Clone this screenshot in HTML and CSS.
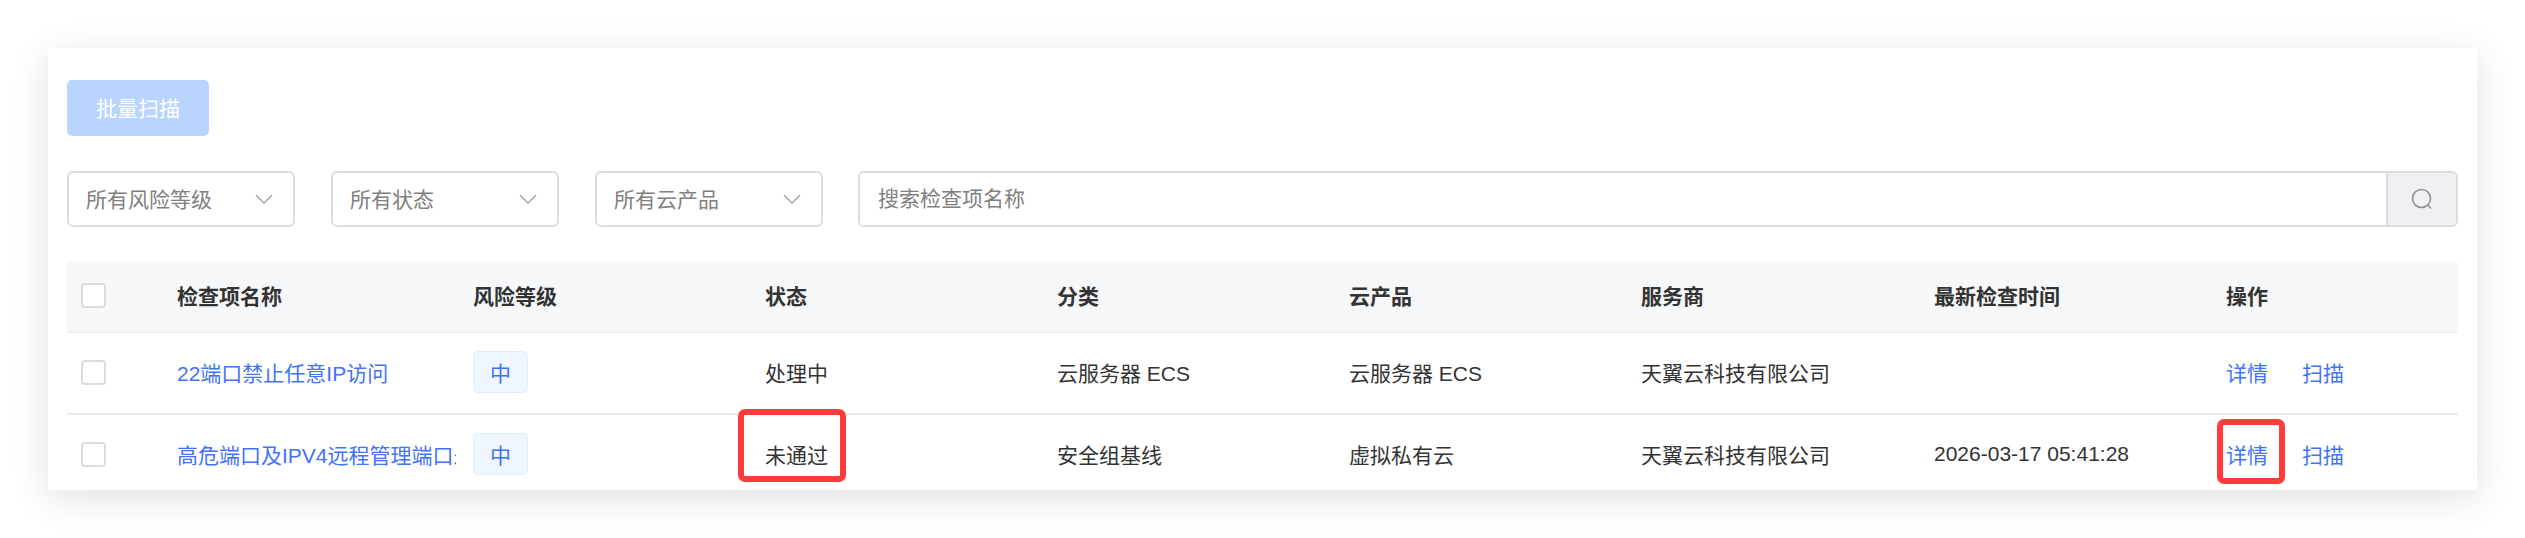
FILE: index.html
```html
<!DOCTYPE html>
<html lang="en">
<head>
    <meta charset="UTF-8">
    <title>Security Checks</title>
    <link rel="stylesheet" href="styles.css">
</head>
<body>
    <div class="card">
        <button class="batch-btn">批量扫描</button>

        <div class="filters">
            <div class="select">所有风险等级
                <svg class="chevron" viewBox="0 0 18 10"><path d="M1 1l8 8 8-8"/></svg>
            </div>
            <div class="select">所有状态
                <svg class="chevron" viewBox="0 0 18 10"><path d="M1 1l8 8 8-8"/></svg>
            </div>
            <div class="select">所有云产品
                <svg class="chevron" viewBox="0 0 18 10"><path d="M1 1l8 8 8-8"/></svg>
            </div>
            <div class="search">
                <input type="text" placeholder="搜索检查项名称">
                <div class="search-btn">
                    <svg viewBox="0 0 22 22"><circle cx="10.5" cy="10.5" r="9"/><path d="M16.8 17l3.2 3.4"/></svg>
                </div>
            </div>
        </div>

        <table class="checks">
            <colgroup>
                <col class="col-check">
                <col class="col-name">
                <col class="col-wide">
                <col class="col-wide">
                <col class="col-wide">
                <col class="col-wide">
                <col class="col-wider">
                <col class="col-wide">
                <col>
            </colgroup>
            <thead>
                <tr>
                    <th><span class="checkbox"></span></th>
                    <th>检查项名称</th>
                    <th>风险等级</th>
                    <th>状态</th>
                    <th>分类</th>
                    <th>云产品</th>
                    <th>服务商</th>
                    <th>最新检查时间</th>
                    <th>操作</th>
                </tr>
            </thead>
            <tbody>
                <tr>
                    <td><span class="checkbox"></span></td>
                    <td><div class="name"><a href="#">22端口禁止任意IP访问</a></div></td>
                    <td><span class="tag">中</span></td>
                    <td>处理中</td>
                    <td>云服务器 ECS</td>
                    <td>云服务器 ECS</td>
                    <td>天翼云科技有限公司</td>
                    <td></td>
                    <td class="actions"><a href="#">详情</a><a href="#">扫描</a></td>
                </tr>
                <tr>
                    <td><span class="checkbox"></span></td>
                    <td><div class="name"><a href="#">高危端口及IPV4远程管理端口未禁止任意IP访问</a></div></td>
                    <td><span class="tag">中</span></td>
                    <td class="marked">未通过<span class="mark mark-status"></span></td>
                    <td>安全组基线</td>
                    <td>虚拟私有云</td>
                    <td>天翼云科技有限公司</td>
                    <td>2026-03-17 05:41:28</td>
                    <td class="actions marked"><a href="#">详情</a><a href="#">扫描</a><span class="mark mark-detail"></span></td>
                </tr>
            </tbody>
        </table>
    </div>
</body>
</html>
```

FILE: styles.css
```css
body {
    margin: 0;
    padding: 48px;
    background-color: white;
    font-family: "Liberation Sans", "Noto Sans CJK SC", sans-serif;
    font-size: 21px;
    color: #333;
}
a {
    color: #4173f5;
    text-decoration: none;
}

.card {
    box-sizing: border-box;
    width: 2429px;
    height: 442px;
    padding: 32px 19px 0;
    background-color: white;
    box-shadow: 0 8px 36px rgba(0, 0, 0, 0.12);
    overflow: hidden;
}

.batch-btn {
    display: block;
    width: 142px;
    height: 56px;
    padding: 0 0 2px;
    border: none;
    border-radius: 5px;
    background-color: #b9d4ff;
    color: white;
    font: inherit;
}

/* Filters */
.filters {
    display: flex;
    gap: 36px;
    margin-top: 35px;
}
.select {
    box-sizing: border-box;
    flex: none;
    width: 228px;
    height: 56px;
    padding: 0 20px 2px 17px;
    display: flex;
    align-items: center;
    justify-content: space-between;
    border: 2px solid #dcdcdc;
    border-radius: 6px;
    color: #808080;
}
.chevron {
    width: 18px;
    height: 10px;
    margin-top: 2px;
    fill: none;
    stroke: #a6a6a6;
    stroke-width: 1.5;
}
.search {
    box-sizing: border-box;
    flex: 1;
    height: 56px;
    margin-left: -1px;
    display: flex;
    border: 2px solid #dcdcdc;
    border-radius: 6px;
    overflow: hidden;
}
.search input {
    flex: 1;
    min-width: 0;
    padding: 0 18px;
    border: none;
    outline: none;
    font: inherit;
    color: #333;
}
.search input::placeholder {
    color: #808080;
}
.search-btn {
    flex: none;
    width: 68px;
    display: flex;
    align-items: center;
    justify-content: center;
    border-left: 2px solid #dcdcdc;
    background-color: #eff0f4;
}
.search-btn svg {
    width: 22px;
    height: 22px;
    fill: none;
    stroke: #8f8f8f;
    stroke-width: 1.5;
}

/* Table */
.checks {
    width: 100%;
    margin-top: 35px;
    border-collapse: collapse;
    table-layout: fixed;
}
.col-check {
    width: 110px;
}
.col-name {
    width: 296px;
}
.col-wide {
    width: 292px;
}
.col-wider {
    width: 293px;
}
.checks th {
    height: 66px;
    padding: 0 0 4px;
    text-align: left;
    font-weight: 700;
    background-color: #f6f7f9;
    border-bottom: 1px solid #e8ebf2;
}
.checks td {
    height: 78px;
    padding: 0 0 2px;
    border-bottom: 2px solid #ececec;
}
.checks th:first-child,
.checks td:first-child {
    padding-left: 14px;
}
.checkbox {
    box-sizing: border-box;
    display: block;
    width: 25px;
    height: 25px;
    border: 2px solid #dcdcdc;
    border-radius: 4px;
    background-color: white;
}
.name {
    width: 279px;
    white-space: nowrap;
    overflow: hidden;
}
.tag {
    box-sizing: border-box;
    display: flex;
    align-items: center;
    justify-content: center;
    width: 55px;
    height: 42px;
    border: 1px solid #e2edff;
    border-radius: 5px;
    background-color: #f0f6ff;
    color: #4173f5;
}
.actions a {
    margin-right: 34px;
}

/* Red annotation boxes on top of the screenshot */
.marked {
    position: relative;
}
.mark {
    position: absolute;
    box-sizing: border-box;
    border: 6px solid #ff3b3b;
    border-radius: 7px;
}
.mark-status {
    left: -27px;
    top: -6px;
    width: 108px;
    height: 73px;
}
.mark-detail {
    left: -9px;
    top: 4px;
    width: 68px;
    height: 65px;
}
```
